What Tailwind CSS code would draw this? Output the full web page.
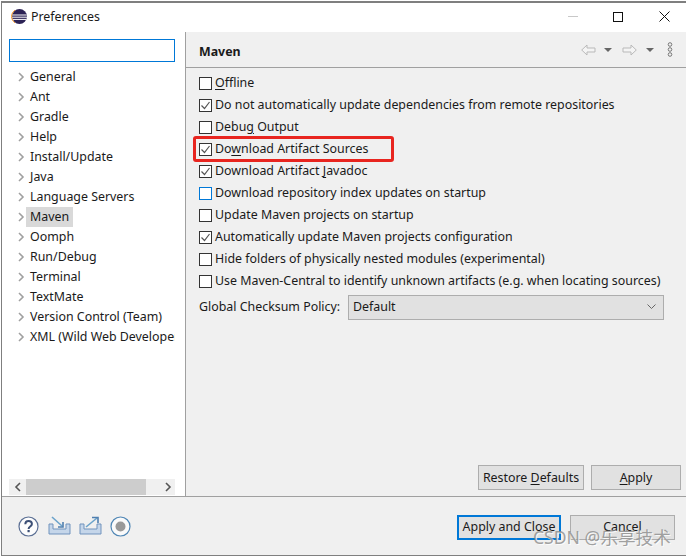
<!DOCTYPE html>
<html lang="en">
<head>
    <meta charset="UTF-8">
    <title>Preferences</title>
    <script src="https://cdn.jsdelivr.net/npm/@tailwindcss/browser@4"></script>
</head>
<body class="bg-white">
<div class="relative w-[686px] h-[556px] overflow-hidden font-['Noto_Sans','Noto_Sans_CJK_SC',sans-serif] text-[12.4px] leading-[16px] text-[#1a1a1a]">
    <div class="flex flex-col h-[556px] pl-px pt-px">
        <div class="flex flex-col flex-1 border-t-2 border-l border-b border-[#7f7f7f] min-h-0">
            <!-- Title bar -->
            <div class="flex items-center h-[29px] shrink-0 bg-white pl-[9px] pb-[2px]">
                <svg width="17" height="17" viewBox="0 0 17 17">
                    <circle cx="8.5" cy="8.5" r="7.5" fill="#2c2255"/>
                    <path d="M1.2 7h14.6M1 9.2h15M1.8 11.4h13.4" stroke="#fff" stroke-width="1"/>
                    <path d="M4 2.2A7.5 7.5 0 0 0 4 14.8" stroke="#f7941e" stroke-width="1" fill="none"/>
                </svg>
                <span class="ml-[3px]">Preferences</span>
                <div class="ml-auto flex items-center pr-[16px]">
                    <div class="w-[10px] h-px bg-[#c8c8c8]"></div>
                    <div class="ml-[35px] w-[10px] h-[10px] border border-[#111]"></div>
                    <svg class="ml-[36px]" width="11" height="11" viewBox="0 0 11 11"><path d="M.5.5l10 10M10.5.5l-10 10" stroke="#111" fill="none"/></svg>
                </div>
            </div>

            <div class="flex flex-1 min-h-0">
                <!-- Left tree pane -->
                <div class="flex flex-col w-[184px] shrink-0 bg-white border-r border-[#a0a0a0] pl-[7px] pr-[10px] pt-[7px]">
                    <div class="h-[23px] border border-[#0078d7] shrink-0"></div>
                    <div class="flex flex-col flex-1 pt-[5px] overflow-hidden">
                        <div class="flex items-center h-[20px] whitespace-nowrap"><svg class="ml-[9px] mr-[1px] shrink-0" width="7" height="10" viewBox="0 0 7 10"><path d="M1 1l4 4-4 4" stroke="#a0a0a0" stroke-width="1.6" fill="none"/></svg><span class="px-[4px]">General</span></div>
                        <div class="flex items-center h-[20px] whitespace-nowrap"><svg class="ml-[9px] mr-[1px] shrink-0" width="7" height="10" viewBox="0 0 7 10"><path d="M1 1l4 4-4 4" stroke="#a0a0a0" stroke-width="1.6" fill="none"/></svg><span class="px-[4px]">Ant</span></div>
                        <div class="flex items-center h-[20px] whitespace-nowrap"><svg class="ml-[9px] mr-[1px] shrink-0" width="7" height="10" viewBox="0 0 7 10"><path d="M1 1l4 4-4 4" stroke="#a0a0a0" stroke-width="1.6" fill="none"/></svg><span class="px-[4px]">Gradle</span></div>
                        <div class="flex items-center h-[20px] whitespace-nowrap"><svg class="ml-[9px] mr-[1px] shrink-0" width="7" height="10" viewBox="0 0 7 10"><path d="M1 1l4 4-4 4" stroke="#a0a0a0" stroke-width="1.6" fill="none"/></svg><span class="px-[4px]">Help</span></div>
                        <div class="flex items-center h-[20px] whitespace-nowrap"><svg class="ml-[9px] mr-[1px] shrink-0" width="7" height="10" viewBox="0 0 7 10"><path d="M1 1l4 4-4 4" stroke="#a0a0a0" stroke-width="1.6" fill="none"/></svg><span class="px-[4px]">Install/Update</span></div>
                        <div class="flex items-center h-[20px] whitespace-nowrap"><svg class="ml-[9px] mr-[1px] shrink-0" width="7" height="10" viewBox="0 0 7 10"><path d="M1 1l4 4-4 4" stroke="#a0a0a0" stroke-width="1.6" fill="none"/></svg><span class="px-[4px]">Java</span></div>
                        <div class="flex items-center h-[20px] whitespace-nowrap"><svg class="ml-[9px] mr-[1px] shrink-0" width="7" height="10" viewBox="0 0 7 10"><path d="M1 1l4 4-4 4" stroke="#a0a0a0" stroke-width="1.6" fill="none"/></svg><span class="px-[4px]">Language Servers</span></div>
                        <div class="flex items-center h-[20px] whitespace-nowrap"><svg class="ml-[9px] mr-[1px] shrink-0" width="7" height="10" viewBox="0 0 7 10"><path d="M1 1l4 4-4 4" stroke="#a0a0a0" stroke-width="1.6" fill="none"/></svg><span class="px-[4px] bg-[#d9d9d9] h-[20px] leading-[20px]">Maven</span></div>
                        <div class="flex items-center h-[20px] whitespace-nowrap"><svg class="ml-[9px] mr-[1px] shrink-0" width="7" height="10" viewBox="0 0 7 10"><path d="M1 1l4 4-4 4" stroke="#a0a0a0" stroke-width="1.6" fill="none"/></svg><span class="px-[4px]">Oomph</span></div>
                        <div class="flex items-center h-[20px] whitespace-nowrap"><svg class="ml-[9px] mr-[1px] shrink-0" width="7" height="10" viewBox="0 0 7 10"><path d="M1 1l4 4-4 4" stroke="#a0a0a0" stroke-width="1.6" fill="none"/></svg><span class="px-[4px]">Run/Debug</span></div>
                        <div class="flex items-center h-[20px] whitespace-nowrap"><svg class="ml-[9px] mr-[1px] shrink-0" width="7" height="10" viewBox="0 0 7 10"><path d="M1 1l4 4-4 4" stroke="#a0a0a0" stroke-width="1.6" fill="none"/></svg><span class="px-[4px]">Terminal</span></div>
                        <div class="flex items-center h-[20px] whitespace-nowrap"><svg class="ml-[9px] mr-[1px] shrink-0" width="7" height="10" viewBox="0 0 7 10"><path d="M1 1l4 4-4 4" stroke="#a0a0a0" stroke-width="1.6" fill="none"/></svg><span class="px-[4px]">TextMate</span></div>
                        <div class="flex items-center h-[20px] whitespace-nowrap"><svg class="ml-[9px] mr-[1px] shrink-0" width="7" height="10" viewBox="0 0 7 10"><path d="M1 1l4 4-4 4" stroke="#a0a0a0" stroke-width="1.6" fill="none"/></svg><span class="px-[4px]">Version Control (Team)</span></div>
                        <div class="flex items-center h-[20px] whitespace-nowrap"><svg class="ml-[9px] mr-[1px] shrink-0" width="7" height="10" viewBox="0 0 7 10"><path d="M1 1l4 4-4 4" stroke="#a0a0a0" stroke-width="1.6" fill="none"/></svg><span class="px-[4px]">XML (Wild Web Developer)</span></div>
                    </div>
                    <!-- Horizontal scrollbar -->
                    <div class="flex items-center h-[16px] mb-px bg-[#f0f0f0] shrink-0">
                        <svg class="ml-[5px]" width="7" height="10" viewBox="0 0 7 10"><path d="M6 1L2 5l4 4" stroke="#555" stroke-width="1.6" fill="none"/></svg>
                        <div class="ml-[5px] w-[120px] h-[16px] bg-[#cdcdcd]"></div>
                        <svg class="ml-[19px]" width="7" height="10" viewBox="0 0 7 10"><path d="M1 1l4 4-4 4" stroke="#555" stroke-width="1.6" fill="none"/></svg>
                    </div>
                </div>

                <!-- Right pane -->
                <div class="flex flex-col flex-1 bg-[#f0f0f0] min-w-0">
                    <div class="flex items-center h-[36px] shrink-0 border-b border-[#a0a0a0] pl-[13px] pr-[13px]">
                        <span class="font-bold mt-[4px]">Maven</span>
                        <div class="ml-auto flex items-center">
                            <svg width="15" height="12" viewBox="0 0 15 12"><path d="M.7 6L6 1v3h8v4H6v3z" fill="#f4f4f4" stroke="#b9b9b9"/></svg>
                            <svg class="ml-[8px]" width="8" height="4" viewBox="0 0 8 4"><path d="M0 0h8L4 4z" fill="#666"/></svg>
                            <svg class="ml-[10px]" width="15" height="12" viewBox="0 0 15 12"><path d="M14.3 6L9 1v3H1v4h8v3z" fill="#f4f4f4" stroke="#b9b9b9"/></svg>
                            <svg class="ml-[9px]" width="8" height="4" viewBox="0 0 8 4"><path d="M0 0h8L4 4z" fill="#666"/></svg>
                            <svg class="ml-[13px]" width="6" height="15" viewBox="0 0 6 15"><circle cx="3" cy="2.5" r="1.8" fill="none" stroke="#777"/><circle cx="3" cy="7.5" r="1.8" fill="none" stroke="#777"/><circle cx="3" cy="12.5" r="1.8" fill="none" stroke="#777"/></svg>
                        </div>
                    </div>

                    <div class="flex flex-col flex-1 pl-[13px] pr-[21px] pt-[4px]">
                        <div class="flex items-center h-[22px] whitespace-nowrap"><span class="w-[13px] h-[13px] bg-white border border-[#333] mr-[3px]"></span><span><u class="underline-offset-2">O</u>ffline</span></div>
                        <div class="flex items-center h-[22px] whitespace-nowrap"><span class="w-[13px] h-[13px] bg-white border border-[#333] mr-[3px] flex"><svg width="11" height="11" viewBox="0 0 11 11"><path d="M1.5 5.5l3 3 5-6.5" stroke="#555" stroke-width="1.2" fill="none"/></svg></span><span>Do not automatically update dependencies from remote repositories</span></div>
                        <div class="flex items-center h-[22px] whitespace-nowrap"><span class="w-[13px] h-[13px] bg-white border border-[#333] mr-[3px]"></span><span>Debu<u class="underline-offset-2">g</u> Output</span></div>
                        <div class="flex items-center h-[22px] whitespace-nowrap"><span class="w-[13px] h-[13px] bg-white border border-[#333] mr-[3px] flex"><svg width="11" height="11" viewBox="0 0 11 11"><path d="M1.5 5.5l3 3 5-6.5" stroke="#555" stroke-width="1.2" fill="none"/></svg></span><span>Do<u class="underline-offset-2">w</u>nload Artifact Sources</span></div>
                        <div class="flex items-center h-[22px] whitespace-nowrap"><span class="w-[13px] h-[13px] bg-white border border-[#333] mr-[3px] flex"><svg width="11" height="11" viewBox="0 0 11 11"><path d="M1.5 5.5l3 3 5-6.5" stroke="#555" stroke-width="1.2" fill="none"/></svg></span><span>Download Artifact <u class="underline-offset-2">J</u>avadoc</span></div>
                        <div class="flex items-center h-[22px] whitespace-nowrap"><span class="w-[13px] h-[13px] bg-white border border-[#0078d7] mr-[3px]"></span><span>Download repository index updates on startup</span></div>
                        <div class="flex items-center h-[22px] whitespace-nowrap"><span class="w-[13px] h-[13px] bg-white border border-[#333] mr-[3px]"></span><span>Update Maven projects on startup</span></div>
                        <div class="flex items-center h-[22px] whitespace-nowrap"><span class="w-[13px] h-[13px] bg-white border border-[#333] mr-[3px] flex"><svg width="11" height="11" viewBox="0 0 11 11"><path d="M1.5 5.5l3 3 5-6.5" stroke="#555" stroke-width="1.2" fill="none"/></svg></span><span>Automatically update Maven projects configuration</span></div>
                        <div class="flex items-center h-[22px] whitespace-nowrap"><span class="w-[13px] h-[13px] bg-white border border-[#333] mr-[3px]"></span><span>Hide folders of physically nested modules (experimental)</span></div>
                        <div class="flex items-center h-[22px] whitespace-nowrap"><span class="w-[13px] h-[13px] bg-white border border-[#333] mr-[3px]"></span><span>Use Maven-Central to identify unknown artifacts (e.g. when locating sources)</span></div>
                        <div class="flex items-center h-[24px] mt-[3px]">
                            <span class="w-[149px] whitespace-nowrap">Global Checksum Policy:</span>
                            <div class="flex items-center w-[316px] h-[25px] bg-[#e1e1e1] border border-[#adadad] pl-[4px] pr-[7px]">
                                <span>Default</span>
                                <svg class="ml-auto" width="9" height="6" viewBox="0 0 9 6"><path d="M.5.5l4 4 4-4" stroke="#666" fill="none"/></svg>
                            </div>
                        </div>
                        <div class="flex justify-end gap-[7px] mt-auto mb-[6px] mr-[-16px]">
                            <div class="flex items-center justify-center w-[106px] h-[25px] bg-[#e1e1e1] border border-[#adadad]"><span>Restore <u class="underline-offset-2">D</u>efaults</span></div>
                            <div class="flex items-center justify-center w-[90px] h-[25px] bg-[#e1e1e1] border border-[#adadad]"><span><u class="underline-offset-2">A</u>pply</span></div>
                        </div>
                    </div>
                </div>
            </div>

            <!-- Bottom bar -->
            <div class="flex items-center h-[59px] shrink-0 bg-[#f0f0f0] border-t border-[#a0a0a0] pl-[16px] pr-[11px]">
                <svg width="21" height="21" viewBox="0 0 21 21"><circle cx="10.5" cy="10.5" r="9.5" fill="#fdfdfd" stroke="#5b6f94" stroke-width="1.2"/><path d="M7.3 8.2c0-4.3 6.6-4.3 6.6-.3 0 2.6-3.3 2.5-3.3 5" stroke="#3c4f75" stroke-width="2" fill="none"/><rect x="9.5" y="14" width="2.2" height="2.2" fill="#3c4f75"/></svg>
                <svg class="ml-[9px]" width="23" height="20" viewBox="0 0 23 20"><path d="M1 8v10h21V8h-4v5H5V8z" fill="#c5d6ea" stroke="#7193bd"/><path d="M4 1l10 9" stroke="#6ba3cb" stroke-width="1.6"/><path d="M15 6v5h-5" stroke="#4f7fb0" stroke-width="1.6" fill="none"/></svg>
                <svg class="ml-[8px]" width="23" height="20" viewBox="0 0 23 20"><path d="M1 8v10h21V8h-4v5H5V8z" fill="#c5d6ea" stroke="#7193bd"/><path d="M7 11L18 2" stroke="#6ba3cb" stroke-width="1.6"/><path d="M13 1.5h6V7" stroke="#4f7fb0" stroke-width="1.6" fill="none"/></svg>
                <svg class="ml-[8px]" width="21" height="21" viewBox="0 0 21 21"><circle cx="10.5" cy="10.5" r="9.5" fill="#fafafa" stroke="#4f86b5" stroke-width="1.2"/><circle cx="10.5" cy="10.5" r="5" fill="#999"/></svg>
                <div class="ml-auto flex gap-[9px] mt-[2px]">
                    <div class="flex items-center justify-center w-[104px] h-[25px] bg-[#e1e1e1] border-2 border-[#0078d7]">Apply and Close</div>
                    <div class="flex items-center justify-center w-[105px] h-[25px] bg-[#e1e1e1] border border-[#adadad]">Cancel</div>
                </div>
            </div>
        </div>
    </div>

    <!-- Red annotation -->
    <div class="absolute left-[193px] top-[136px] w-[201px] h-[26px] border-[3px] border-[#e8251f] rounded-[3px]"></div>
    <!-- Watermark -->
    <div class="absolute left-[533px] top-[526px] text-[17.6px] leading-[22px] whitespace-nowrap text-[#8a8a8a]/80 [text-shadow:1px_1px_0_rgba(255,255,255,0.8)]">CSDN @乐享技术</div>
</div>
</body>
</html>
